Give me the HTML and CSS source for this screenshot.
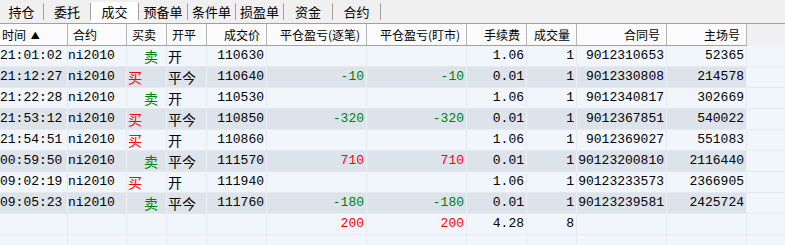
FILE: index.html
```html
<!DOCTYPE html>
<html lang="zh-CN">
<head>
<meta charset="utf-8">
<title>成交</title>
<link rel="stylesheet" href="styles.css">
</head>
<body>
<div class="tabs">
  <span class="tab t43">持仓</span><span class="sep"></span>
  <span class="tab t46">委托</span><span class="sep"></span>
  <span class="tab t47 active">成交</span><span class="sep"></span>
  <span class="tab t48">预备单</span><span class="sep"></span>
  <span class="tab t47">条件单</span><span class="sep"></span>
  <span class="tab t47">损盈单</span><span class="sep"></span>
  <span class="tab t48">资金</span><span class="sep"></span>
  <span class="tab t47">合约</span><span class="sep"></span>
</div>
<div class="grid">
  <div class="row hdr">
    <div class="h first">时间 <span class="arrow">▲</span></div>
    <div class="h l">合约</div>
    <div class="h l">买卖</div>
    <div class="h l">开平</div>
    <div class="h">成交价</div>
    <div class="h">平仓盈亏(逐笔)</div>
    <div class="h">平仓盈亏(盯市)</div>
    <div class="h">手续费</div>
    <div class="h">成交量</div>
    <div class="h">合同号</div>
    <div class="h">主场号</div>
    <div class="h fill"></div>
  </div>

  <div class="row light">
    <div class="c time">21:01:02</div><div class="c sym">ni2010</div><div class="c cn sell">卖</div><div class="c cn oc">开</div><div class="c">110630</div><div class="c"></div><div class="c"></div><div class="c">1.06</div><div class="c">1</div><div class="c">9012310653</div><div class="c">52365</div><div class="c fill"></div>
  </div>
  <div class="row dark">
    <div class="c time">21:12:27</div><div class="c sym">ni2010</div><div class="c cn buy">买</div><div class="c cn oc">平今</div><div class="c">110640</div><div class="c green">-10</div><div class="c green">-10</div><div class="c">0.01</div><div class="c">1</div><div class="c">9012330808</div><div class="c">214578</div><div class="c fill"></div>
  </div>
  <div class="row light">
    <div class="c time">21:22:28</div><div class="c sym">ni2010</div><div class="c cn sell">卖</div><div class="c cn oc">开</div><div class="c">110530</div><div class="c"></div><div class="c"></div><div class="c">1.06</div><div class="c">1</div><div class="c">9012340817</div><div class="c">302669</div><div class="c fill"></div>
  </div>
  <div class="row dark">
    <div class="c time">21:53:12</div><div class="c sym">ni2010</div><div class="c cn buy">买</div><div class="c cn oc">平今</div><div class="c">110850</div><div class="c green">-320</div><div class="c green">-320</div><div class="c">0.01</div><div class="c">1</div><div class="c">9012367851</div><div class="c">540022</div><div class="c fill"></div>
  </div>
  <div class="row light">
    <div class="c time">21:54:51</div><div class="c sym">ni2010</div><div class="c cn buy">买</div><div class="c cn oc">开</div><div class="c">110860</div><div class="c"></div><div class="c"></div><div class="c">1.06</div><div class="c">1</div><div class="c">9012369027</div><div class="c">551083</div><div class="c fill"></div>
  </div>
  <div class="row dark">
    <div class="c time">00:59:50</div><div class="c sym">ni2010</div><div class="c cn sell">卖</div><div class="c cn oc">平今</div><div class="c">111570</div><div class="c red">710</div><div class="c red">710</div><div class="c">0.01</div><div class="c">1</div><div class="c">90123200810</div><div class="c">2116440</div><div class="c fill"></div>
  </div>
  <div class="row light">
    <div class="c time">09:02:19</div><div class="c sym">ni2010</div><div class="c cn buy">买</div><div class="c cn oc">开</div><div class="c">111940</div><div class="c"></div><div class="c"></div><div class="c">1.06</div><div class="c">1</div><div class="c">90123233573</div><div class="c">2366905</div><div class="c fill"></div>
  </div>
  <div class="row dark">
    <div class="c time">09:05:23</div><div class="c sym">ni2010</div><div class="c cn sell">卖</div><div class="c cn oc">平今</div><div class="c">111760</div><div class="c green">-180</div><div class="c green">-180</div><div class="c">0.01</div><div class="c">1</div><div class="c">90123239581</div><div class="c">2425724</div><div class="c fill"></div>
  </div>
  <div class="row light">
    <div class="c time"></div><div class="c sym"></div><div class="c cn"></div><div class="c cn"></div><div class="c"></div><div class="c red">200</div><div class="c red">200</div><div class="c">4.28</div><div class="c">8</div><div class="c"></div><div class="c"></div><div class="c fill"></div>
  </div>
  <div class="row light">
    <div class="c time"></div><div class="c sym"></div><div class="c cn"></div><div class="c cn"></div><div class="c"></div><div class="c"></div><div class="c"></div><div class="c"></div><div class="c"></div><div class="c"></div><div class="c"></div><div class="c fill"></div>
  </div>
</div>
</body>
</html>
```

FILE: styles.css
```css
html, body {
  margin: 0;
  padding: 0;
  background: #f0f0f0;
  overflow: hidden;
}

body {
  width: 785px;
  height: 245px;
  font-family: "Noto Sans CJK SC", "Liberation Sans", sans-serif;
  color: #000;
}

/* ---- tab strip ---- */
.tabs {
  display: flex;
  align-items: flex-start;
  height: 23px;
  background: #f0f0f0;
}

.tab {
  box-sizing: border-box;
  height: 21px;
  margin-top: 2px;
  font-size: 13px;
  line-height: 20px;
  text-align: center;
  white-space: nowrap;
}

.tab.active {
  background: #ffffff;
}

.t43 { width: 43px; }
.t46 { width: 46px; }
.t47 { width: 47px; }
.t48 { width: 48px; }

.sep {
  width: 1px;
  height: 17px;
  margin-top: 3px;
  background: #a0a0a0;
}

/* ---- grid ---- */
.grid {
  border-top: 1px solid #a0a0a0;
}

.row {
  display: grid;
  grid-template-columns: 68px 59px 40px 40px 60px 100px 100px 60px 50px 90px 80px 1fr;
}

.h {
  box-sizing: border-box;
  height: 22px;
  background: #fbfbfb;
  border-right: 1px solid #b4b4b4;
  border-bottom: 1px solid #a0a0a0;
  font-size: 12px;
  line-height: 21px;
  text-align: right;
  padding-right: 6px;
  white-space: nowrap;
  overflow: hidden;
}

.h.l {
  text-align: left;
  padding-left: 5px;
  padding-right: 0;
}

.h.first {
  text-align: left;
  padding-left: 2px;
  padding-right: 0;
}

.arrow {
  font-size: 9px;
  vertical-align: 1px;
  margin-left: 2px;
}

.h.fill {
  background: #f0f0f0;
  border-right: none;
  border-bottom-color: #f0f0f0;
}

.c {
  box-sizing: border-box;
  height: 21px;
  border-right: 1px solid #e6eaef;
  border-bottom: 1px solid #e6eaef;
  font-family: "Liberation Mono", "Noto Sans CJK SC", monospace;
  font-size: 13px;
  line-height: 20px;
  text-align: right;
  padding-right: 2px;
  white-space: nowrap;
  overflow: hidden;
}

.light .c { background: #f0f6fc; }
.dark .c { background: #dde3ea; border-right-color: #eef1f5; }
.row .c.fill { background: #f0f6fc; border-right: none; }

.c.time { padding-right: 5px; }

.c.sym {
  text-align: left;
  padding-left: 0;
}

.c.cn {
  font-family: "Noto Sans CJK SC", sans-serif;
  font-size: 14px;
  text-align: left;
  padding-left: 1px;
}

.c.buy { color: #ff0000; }
.c.sell { color: #008000; padding-left: 17px; }

.green { color: #008000; }
.red { color: #ff0000; }
```
